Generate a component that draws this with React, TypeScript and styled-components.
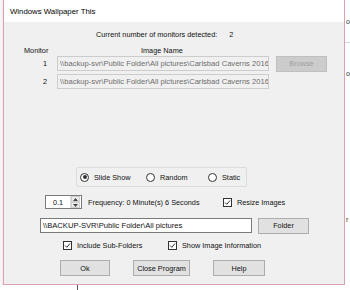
import React from "react";
import styled, { createGlobalStyle } from "styled-components";

const GlobalStyle = createGlobalStyle`
  html, body {
    margin: 0;
    padding: 0;
    background: #ffffff;
  }
`;

const Desktop = styled.div`
  width: 350px;
  height: 290px;
  overflow: hidden;
  display: grid;
  grid-template-columns: 3px 342px 5px;
  grid-template-rows: 285px 5px;
  background: #f7f7f7;
  font-family: "Liberation Sans", Arial, sans-serif;
`;

const Window = styled.div`
  grid-column: 2;
  grid-row: 1;
  box-sizing: border-box;
  border: 1px solid #d9a3b0;
  border-top: none;
  display: flex;
  flex-direction: column;
  background: #f0f0f0;
  box-shadow: 0 1px 2px rgba(200, 120, 140, 0.3);
`;

const TitleBar = styled.div`
  height: 22px;
  flex: none;
  background: #ffffff;
  display: flex;
  align-items: center;
  padding-left: 6px;
  font-size: 7.8px;
  color: #000;
`;

const Client = styled.div`
  flex: 1;
  display: flex;
  flex-direction: column;
  font-size: 7.3px;
  color: #111;
`;

const Row = styled.div<{ $top: number; $left: number; $h?: number; $gap?: number }>`
  display: flex;
  align-items: center;
  margin-top: ${(p) => p.$top}px;
  padding-left: ${(p) => p.$left}px;
  height: ${(p) => p.$h ?? 12}px;
  gap: ${(p) => p.$gap ?? 0}px;
  white-space: nowrap;
`;

const Count = styled.span`
  margin-left: 12px;
`;

const ColLabel = styled.span<{ $w: number }>`
  width: ${(p) => p.$w}px;
`;

const Index = styled.span`
  width: 10px;
  text-align: right;
  margin-right: 10px;
`;

const TextBox = styled.div<{ $w: number; $disabled?: boolean }>`
  box-sizing: border-box;
  width: ${(p) => p.$w}px;
  height: 15px;
  border: 1px solid ${(p) => (p.$disabled ? "#cccccc" : "#7a7a7a")};
  background: ${(p) => (p.$disabled ? "#f0f0f0" : "#ffffff")};
  color: ${(p) => (p.$disabled ? "#6d6d6d" : "#111")};
  display: flex;
  align-items: center;
  padding-left: 2px;
  overflow: hidden;
  font-size: 7.6px;
`;

const Button = styled.div<{ $w: number; $disabled?: boolean }>`
  box-sizing: border-box;
  width: ${(p) => p.$w}px;
  height: 16px;
  border: 1px solid ${(p) => (p.$disabled ? "#bfbfbf" : "#adadad")};
  background: ${(p) => (p.$disabled ? "#cccccc" : "#e1e1e1")};
  color: ${(p) => (p.$disabled ? "#a0a0a0" : "#111")};
  display: flex;
  align-items: center;
  justify-content: center;
`;

const GroupBox = styled.div`
  box-sizing: border-box;
  width: 171px;
  height: 20px;
  border: 1px solid #dcdcdc;
  border-radius: 2px;
  display: flex;
  align-items: center;
  padding-left: 3px;
`;

const Option = styled.label<{ $w?: number }>`
  display: flex;
  align-items: center;
  gap: 5px;
  color: #111;
  width: ${(p) => (p.$w ? `${p.$w}px` : "auto")};
`;

const RadioCircle = styled.span<{ $on?: boolean }>`
  box-sizing: border-box;
  width: 9px;
  height: 9px;
  border-radius: 50%;
  border: 1px solid #333;
  background: #fff;
  display: flex;
  align-items: center;
  justify-content: center;
  &::after {
    content: "";
    width: 4px;
    height: 4px;
    border-radius: 50%;
    background: ${(p) => (p.$on ? "#333" : "transparent")};
  }
`;

const CheckBoxSquare = styled.span`
  box-sizing: border-box;
  width: 9px;
  height: 9px;
  border: 1px solid #333;
  background: #fff;
  display: flex;
  align-items: center;
  justify-content: center;
`;

const Spin = styled.div`
  box-sizing: border-box;
  width: 37px;
  height: 14px;
  border: 1px solid #7a7a7a;
  background: #fff;
  display: flex;
  align-items: center;
  margin-right: 6px;
`;

const SpinValue = styled.span`
  flex: 1;
  text-align: center;
`;

const SpinButtons = styled.div`
  width: 9px;
  height: 12px;
  display: flex;
  flex-direction: column;
  border-left: 1px solid #dcdcdc;
  margin-right: 1px;
`;

const SpinHalf = styled.div`
  flex: 1;
  display: flex;
  align-items: center;
  justify-content: center;
  background: #ececec;
  border: 1px solid #d0d0d0;
`;

const Peek = styled.div`
  grid-column: 3;
  grid-row: 1 / span 2;
  background: #ffffff;
  display: flex;
  flex-direction: column;
  font-size: 7px;
  color: #333;
`;

const PeekGlyph = styled.span<{ $top: number }>`
  margin-top: ${(p) => p.$top}px;
  padding-left: 1px;
  line-height: 8px;
`;

const PeekRule = styled.div<{ $top: number }>`
  margin-top: ${(p) => p.$top}px;
  height: 1px;
  background: #d6d6d6;
`;

const BottomStrip = styled.div`
  grid-column: 1 / span 2;
  grid-row: 2;
  background: #ffffff;
  display: flex;
`;

const StripLine = styled.div`
  margin-left: 77px;
  width: 1px;
  background: #555;
`;

const Check = () => (
  <CheckBoxSquare>
    <svg width="7" height="7" viewBox="0 0 7 7">
      <path d="M1 3.5 L2.8 5.3 L6 1.5" fill="none" stroke="#333" strokeWidth="1" />
    </svg>
  </CheckBoxSquare>
);

const Arrow = ({ up }: { up?: boolean }) => (
  <svg width="5" height="3" viewBox="0 0 5 3">
    <path d={up ? "M0 3 L2.5 0 L5 3 Z" : "M0 0 L2.5 3 L5 0 Z"} fill="#444" />
  </svg>
);

const path = "\\\\backup-svr\\Public Folder\\All pictures\\Carlsbad Caverns 2016";

export default function App() {
  return (
    <>
      <GlobalStyle />
      <Desktop>
        <Window>
          <TitleBar>Windows Wallpaper This</TitleBar>
          <Client>
            <Row $top={6} $left={92}>
              <span>Current number of monitors detected:</span>
              <Count>2</Count>
            </Row>
            <Row $top={4} $left={20}>
              <ColLabel $w={117}>Monitor</ColLabel>
              <span>Image Name</span>
            </Row>
            <Row $top={0} $left={33} $h={15}>
              <Index>1</Index>
              <TextBox $w={212} $disabled>{path}</TextBox>
              <Button $w={51} $disabled style={{ marginLeft: 7 }}>Browse</Button>
            </Row>
            <Row $top={3} $left={33} $h={15}>
              <Index>2</Index>
              <TextBox $w={212} $disabled>{path}</TextBox>
            </Row>
            <Row $top={78} $left={72} $h={20}>
              <GroupBox>
                <Option $w={66}>
                  <RadioCircle $on />
                  Slide Show
                </Option>
                <Option $w={62}>
                  <RadioCircle />
                  Random
                </Option>
                <Option>
                  <RadioCircle />
                  Static
                </Option>
              </GroupBox>
            </Row>
            <Row $top={8} $left={41} $h={14}>
              <Spin>
                <SpinValue>0.1</SpinValue>
                <SpinButtons>
                  <SpinHalf><Arrow up /></SpinHalf>
                  <SpinHalf><Arrow /></SpinHalf>
                </SpinButtons>
              </Spin>
              <ColLabel $w={135}>Frequency: 0 Minute(s) 6 Seconds</ColLabel>
              <Option>
                <Check />
                Resize Images
              </Option>
            </Row>
            <Row $top={9} $left={36} $h={15}>
              <TextBox $w={212}>\\BACKUP-SVR\Public Folder\All pictures</TextBox>
              <Button $w={51} style={{ marginLeft: 6 }}>Folder</Button>
            </Row>
            <Row $top={6} $left={59}>
              <Option $w={105}>
                <Check />
                Include Sub-Folders
              </Option>
              <Option>
                <Check />
                Show Image Information
              </Option>
            </Row>
            <Row $top={9} $left={56} $h={16} $gap={23}>
              <Button $w={50}>Ok</Button>
              <Button $w={57}>Close Program</Button>
              <Button $w={52}>Help</Button>
            </Row>
          </Client>
        </Window>
        <Peek>
          <PeekGlyph $top={18}>o</PeekGlyph>
          <PeekRule $top={16} />
          <PeekGlyph $top={27}>o</PeekGlyph>
          <PeekGlyph $top={138}>r</PeekGlyph>
        </Peek>
        <BottomStrip>
          <StripLine />
        </BottomStrip>
      </Desktop>
    </>
  );
}
